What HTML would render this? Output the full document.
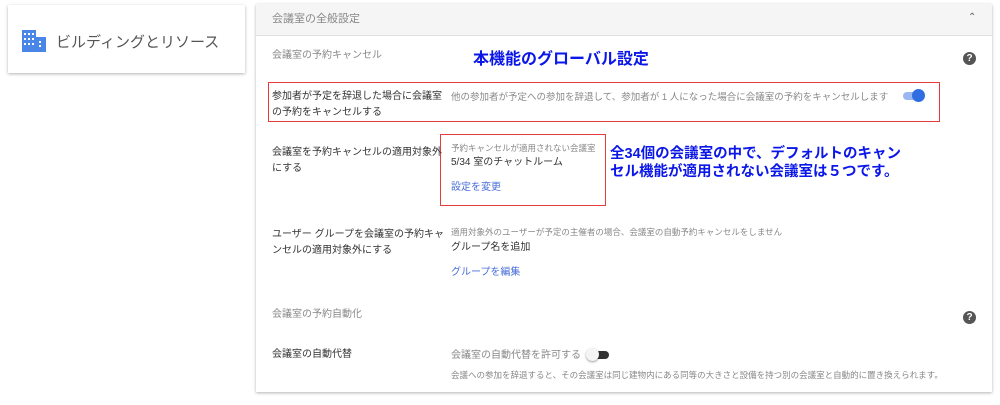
<!DOCTYPE html><html><head><meta charset="utf-8"><style>
body{margin:0;width:1000px;height:405px;background:#fff;font-family:"Liberation Sans","Noto Sans CJK JP",sans-serif;position:relative;overflow:hidden}
.a{position:absolute;white-space:nowrap}
.s{font-size:10px;color:#333;line-height:16px}
.g{color:#888}
.b{color:#0b17e8;font-weight:bold;font-size:14px;line-height:18px}
.red{position:absolute;border:1.5px solid #e63c3c}
.q{position:absolute;width:13px;height:13px;border-radius:50%;background:#555;color:#fff;font-size:10px;font-weight:bold;text-align:center;line-height:13px}
</style></head><body>
<div class="a" style="left:8px;top:5px;width:237px;height:68px;box-shadow:0 1px 3px rgba(0,0,0,.3);background:#fff"></div>
<svg class="a" style="left:22px;top:30px" width="25" height="22" viewBox="0 0 25 22"><rect x="0" y="0" width="14" height="22" fill="#4a86e8"/><rect x="14" y="7" width="10" height="15" fill="#4a86e8"/><g fill="#fff"><rect x="2" y="3" width="2" height="2"/><rect x="6" y="3" width="2" height="2"/><rect x="10" y="3" width="2" height="2"/><rect x="2" y="8" width="2" height="2"/><rect x="6" y="8" width="2" height="2"/><rect x="10" y="8" width="2" height="2"/><rect x="2" y="13" width="2" height="2"/><rect x="6" y="13" width="2" height="2"/><rect x="10" y="13" width="2" height="2"/><rect x="17" y="11" width="2" height="2"/><rect x="17" y="15" width="2" height="2"/></g></svg>
<div class="a" style="left:56px;top:31px;font-size:15px;color:#555">ビルディングとリソース</div>

<div class="a" style="left:256px;top:4px;width:736px;height:388px;box-shadow:0 1px 3px rgba(0,0,0,.3);background:#fff"></div>
<div class="a" style="left:256px;top:4px;width:736px;height:31px;background:#f5f5f5;border-bottom:1px solid #e0e0e0"></div>
<div class="a s g" style="left:272px;top:11px;font-size:11px">会議室の全般設定</div>
<div class="a" style="left:968px;top:12px;font-size:10px;color:#666">&#8963;</div>

<div class="a s g" style="left:272px;top:48px">会議室の予約キャンセル</div>
<div class="a b" style="left:473px;top:51px;font-size:16px">本機能のグローバル設定</div>
<div class="q" style="left:963px;top:52px">?</div>

<div class="red" style="left:268px;top:82px;width:670px;height:38px"></div>
<div class="a s" style="left:272px;top:89px">参加者が予定を辞退した場合に会議室<br>の予約をキャンセルする</div>
<div class="a s g" style="left:451px;top:90px;font-size:9.5px">他の参加者が予定への参加を辞退して、参加者が 1 人になった場合に会議室の予約をキャンセルします</div>
<div class="a" style="left:903px;top:92px;width:20px;height:8px;border-radius:4px;background:#9bb7f0"></div>
<div class="a" style="left:912px;top:89px;width:13px;height:13px;border-radius:50%;background:#2f6de1"></div>

<div class="red" style="left:440px;top:134px;width:164px;height:70px"></div>
<div class="a s" style="left:272px;top:145px">会議室を予約キャンセルの適用対象外<br>にする</div>
<div class="a s g" style="left:451px;top:140px;font-size:8.5px">予約キャンセルが適用されない会議室</div>
<div class="a s" style="left:451px;top:155px">5/34 室のチャットルーム</div>
<div class="a s" style="left:451px;top:180px;color:#4a6fd8">設定を変更</div>
<div class="a b" style="left:610px;top:145px;font-size:14.5px">全34個の会議室の中で、デフォルトのキャン<br>セル機能が適用されない会議室は５つです。</div>

<div class="a s" style="left:272px;top:227px">ユーザー グループを会議室の予約キャ<br>ンセルの適用対象外にする</div>
<div class="a s g" style="left:451px;top:224px;font-size:8.5px">適用対象外のユーザーが予定の主催者の場合、会議室の自動予約キャンセルをしません</div>
<div class="a s" style="left:451px;top:240px">グループ名を追加</div>
<div class="a s" style="left:451px;top:265px;color:#4a6fd8">グループを編集</div>

<div class="a s g" style="left:272px;top:307px">会議室の予約自動化</div>
<div class="q" style="left:963px;top:311px">?</div>
<div class="a s" style="left:272px;top:347px">会議室の自動代替</div>
<div class="a s g" style="left:451px;top:348px">会議室の自動代替を許可する</div>
<div class="a" style="left:589px;top:351px;width:20px;height:8px;border-radius:4px;background:#333"></div>
<div class="a" style="left:586px;top:348px;width:13px;height:13px;border-radius:50%;background:#f5f5f5;box-shadow:0 1px 2px rgba(0,0,0,.4)"></div>
<div class="a s g" style="left:451px;top:367px;font-size:8.5px">会議への参加を辞退すると、その会議室は同じ建物内にある同等の大きさと設備を持つ別の会議室と自動的に置き換えられます。</div>
</body></html>
